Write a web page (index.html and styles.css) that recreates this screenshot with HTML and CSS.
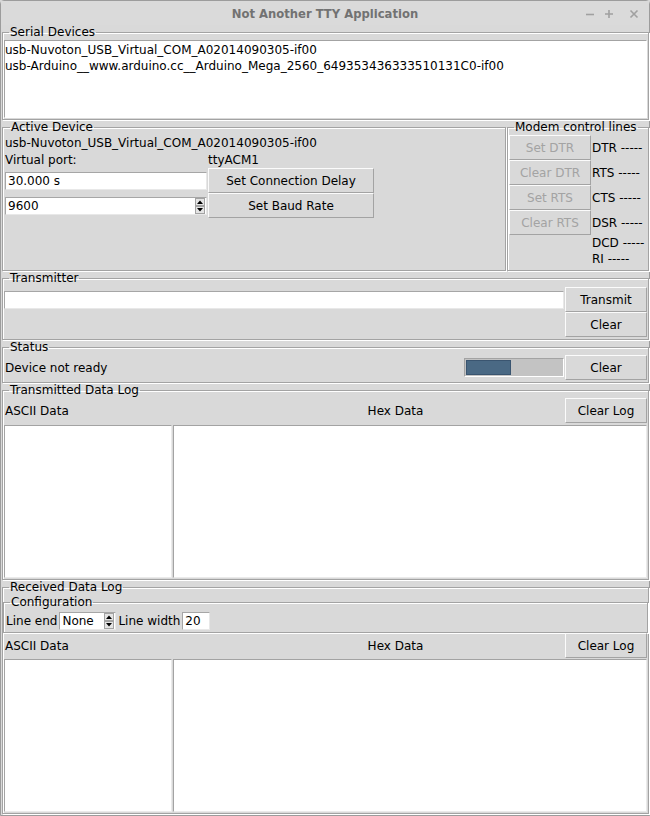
FILE: index.html
```html
<!DOCTYPE html>
<html lang="en">
  <head>
    <meta charset="UTF-8" />
    <title>Not Another TTY Application</title>
    <link rel="stylesheet" href="styles.css">
  </head>
  <body>
    <div class="window">
      <div class="titlebar">
        <span></span>
        <span class="title">Not Another TTY Application</span>
        <div class="wm-buttons">
          <svg width="10" height="10" viewBox="0 0 10 10"><path d="M1 5.5h8" stroke="#a0a0a0" stroke-width="1.6"/></svg>
          <svg width="10" height="10" viewBox="0 0 10 10"><path d="M1 5h8M5 1v8" stroke="#a0a0a0" stroke-width="1.6"/></svg>
          <svg class="close" width="10" height="10" viewBox="0 0 10 10"><path d="M1.5 1.5l7 7M8.5 1.5l-7 7" stroke="#a0a0a0" stroke-width="1.6"/></svg>
        </div>
      </div>

      <div class="app">
        <!-- Serial device list -->
        <fieldset class="group devices">
          <legend>Serial Devices</legend>
          <div class="listbox">
            <div>usb-Nuvoton_USB_Virtual_COM_A02014090305-if00</div>
            <div>usb-Arduino__www.arduino.cc__Arduino_Mega_2560_649353436333510131C0-if00</div>
          </div>
        </fieldset>

        <div class="device-row">
          <fieldset class="group active">
            <legend>Active Device</legend>
            <div class="active-grid">
              <div class="span2">usb-Nuvoton_USB_Virtual_COM_A02014090305-if00</div>
              <div>Virtual port:</div>
              <div>ttyACM1</div>
              <div class="cell"><div class="entry">30.000 s</div></div>
              <button class="btn">Set Connection Delay</button>
              <div class="cell">
                <div class="spinbox">
                  <span class="spin-value">9600</span>
                  <svg class="spin-arrows" width="10" height="16" viewBox="0 0 10 16"><rect x="0.5" y="0.5" width="9" height="7" fill="#e4e4e4" stroke="#a3a3a3"/><rect x="0.5" y="8.5" width="9" height="7" fill="#e4e4e4" stroke="#a3a3a3"/><path d="M2 6h6L5 2.5z M2 10h6L5 13.5z" fill="#000"/></svg>
                </div>
              </div>
              <button class="btn">Set Baud Rate</button>
            </div>
          </fieldset>

          <fieldset class="group modem">
            <legend>Modem control lines</legend>
            <div class="modem-grid">
              <button class="btn" disabled>Set DTR</button><span>DTR -----</span>
              <button class="btn" disabled>Clear DTR</button><span>RTS -----</span>
              <button class="btn" disabled>Set RTS</button><span>CTS -----</span>
              <button class="btn" disabled>Clear RTS</button><span>DSR -----</span>
              <span></span><span>DCD -----</span>
              <span></span><span>RI -----</span>
            </div>
          </fieldset>
        </div>

        <fieldset class="group transmitter">
          <legend>Transmitter</legend>
          <div class="tx-grid">
            <div class="cell"><div class="entry full"></div></div>
            <button class="btn">Transmit</button>
            <span></span>
            <button class="btn">Clear</button>
          </div>
        </fieldset>

        <fieldset class="group status">
          <legend>Status</legend>
          <div class="status-row">
            <span class="status-text">Device not ready</span>
            <div class="progress"><div class="progress-fill"></div></div>
            <button class="btn">Clear</button>
          </div>
        </fieldset>

        <fieldset class="group log">
          <legend>Transmitted Data Log</legend>
          <div class="log-head">
            <span>ASCII Data</span>
            <span class="hex-label">Hex Data</span>
            <button class="btn">Clear Log</button>
          </div>
          <div class="log-body">
            <div class="text-area"></div>
            <div class="text-area"></div>
          </div>
        </fieldset>

        <fieldset class="group log received">
          <legend>Received Data Log</legend>
          <fieldset class="group config">
            <legend>Configuration</legend>
            <div class="config-row">
              <span>Line end</span>
              <div class="spinbox small">
                <span class="spin-value">None</span>
                <svg class="spin-arrows" width="10" height="16" viewBox="0 0 10 16"><rect x="0.5" y="0.5" width="9" height="7" fill="#e4e4e4" stroke="#a3a3a3"/><rect x="0.5" y="8.5" width="9" height="7" fill="#e4e4e4" stroke="#a3a3a3"/><path d="M2 6h6L5 2.5z M2 10h6L5 13.5z" fill="#000"/></svg>
              </div>
              <span>Line width</span>
              <div class="entry tiny">20</div>
            </div>
          </fieldset>
          <div class="log-head">
            <span>ASCII Data</span>
            <span class="hex-label">Hex Data</span>
            <button class="btn">Clear Log</button>
          </div>
          <div class="log-body">
            <div class="text-area"></div>
            <div class="text-area"></div>
          </div>
        </fieldset>
      </div>
    </div>
  </body>
</html>
```

FILE: styles.css
```css
* {
  margin: 0;
  padding: 0;
  box-sizing: border-box;
}

body {
  font-family: "DejaVu Sans", sans-serif;
  font-size: 12px;
  color: #000;
  background-color: #d9d9d9;
  width: 650px;
  height: 816px;
  overflow: hidden;
}

.window {
  width: 650px;
  height: 816px;
  border: 1px solid #9c9c9c;
  border-radius: 4px 4px 0 0;
  background-color: #d9d9d9;
  display: flex;
  flex-direction: column;
}

/* window manager title bar */
.titlebar {
  height: 24px;
  padding-top: 2px;
  display: grid;
  grid-template-columns: 1fr auto 1fr;
  align-items: center;
  background-color: #dadada;
}

.title {
  font-weight: bold;
  font-size: 11.6px;
  color: #727272;
}

.wm-buttons {
  display: flex;
  justify-content: flex-end;
  gap: 9px;
  padding-right: 10px;
}

.wm-buttons svg {
  display: block;
}

.wm-buttons .close {
  margin-left: 6px;
}

.app {
  flex: 1;
  padding-left: 1px;
  display: flex;
  flex-direction: column;
}

/* Tk style labelframe */
.group {
  border: 1px solid #a3a3a3;
  box-shadow: inset 1px 1px 0 #fff, 1px 1px 0 #fff;
  padding: 1px;
  min-width: 0;
}

.group legend {
  margin-left: 5px;
  padding: 0 1px;
  line-height: 14px;
}

.listbox {
  height: 78px;
  background: #fff;
  border: 1px solid;
  border-color: #a3a3a3 #fff #fff #a3a3a3;
  padding: 1px 0 0 0;
  line-height: 16px;
}

.device-row {
  display: flex;
  gap: 1px;
}

.active {
  flex: 1;
  padding: 1px 1px 1px 2px;
}

.active-grid {
  display: grid;
  grid-template-columns: 203px 166px;
  grid-template-rows: 16px 17px 25px 25px;
  align-items: center;
}

.span2 {
  grid-column: span 2;
  white-space: nowrap;
}

.cell {
  display: flex;
  align-items: center;
}

.entry {
  height: 18px;
  width: 202px;
  background: #fff;
  border: 1px solid #a6a6a6;
  border-right-color: #e8e8e8;
  border-bottom-color: #e8e8e8;
  padding-left: 2px;
  line-height: 16px;
}

.entry.full {
  width: 100%;
}

.entry.tiny {
  width: 28px;
}

.spinbox {
  height: 18px;
  width: 202px;
  background: #fff;
  border: 1px solid #a6a6a6;
  border-right-color: #e8e8e8;
  border-bottom-color: #e8e8e8;
  display: flex;
  align-items: center;
  padding: 0 1px 0 2px;
}

.spinbox.small {
  width: 57px;
}

.spin-value {
  flex: 1;
  line-height: 16px;
}

.spin-arrows {
  display: block;
}

.btn {
  height: 25px;
  font-family: inherit;
  font-size: 12px;
  color: #000;
  background-color: #d9d9d9;
  border: 1px solid;
  border-color: #fbfbfb #a3a3a3 #a3a3a3 #fbfbfb;
  cursor: pointer;
}

.btn:disabled {
  color: #a3a3a3;
  cursor: default;
}

.modem {
  width: 142px;
  padding-bottom: 3px;
}

.modem-grid {
  display: grid;
  grid-template-columns: 82px auto;
  grid-template-rows: 25px 25px 25px 25px 16px 16px;
  column-gap: 1px;
  align-items: center;
}

.modem-grid span {
  white-space: nowrap;
}

.transmitter {
  padding-top: 2px;
  padding-bottom: 2px;
}

.tx-grid {
  display: grid;
  grid-template-columns: 1fr 82px;
  grid-template-rows: 25px 25px;
  column-gap: 1px;
}

.status {
  padding-top: 1px;
  padding-bottom: 2px;
}

.status-row {
  display: flex;
  align-items: center;
  height: 25px;
}

.status-text {
  flex: 1;
  padding-left: 1px;
}

.progress {
  width: 100px;
  height: 19px;
  margin-right: 1px;
  background-color: #c3c3c3;
  border: 1px solid;
  border-color: #a3a3a3 #fff #fff #a3a3a3;
  padding: 1px;
}

.progress-fill {
  width: 45px;
  height: 100%;
  background-color: #4a6984;
  border: 1px solid #3a5570;
}

.status-row .btn {
  width: 82px;
}

.log-head {
  display: grid;
  grid-template-columns: 168px 1fr 82px;
  column-gap: 1px;
  align-items: center;
  height: 25px;
  margin-bottom: 2px;
}

.log-head span {
  padding-left: 1px;
}

.hex-label {
  text-align: center;
  padding-left: 54px !important;
}

.log-body {
  display: grid;
  grid-template-columns: 168px 1fr;
  column-gap: 1px;
}

.text-area {
  height: 153px;
  background: #fff;
  border: 1px solid;
  border-color: #a3a3a3 #eaeaea #eaeaea #a3a3a3;
}

.received {
  padding: 1px;
}

.config {
  margin: 0 0 0 -1px;
  width: calc(100% + 2px);
  padding: 0 1px;
}

.config-row {
  display: flex;
  align-items: center;
  gap: 2px;
  height: 22px;
  margin-top: 1px;
  padding-left: 1px;
}

.received .log-head {
  margin-bottom: 1px;
}
```
